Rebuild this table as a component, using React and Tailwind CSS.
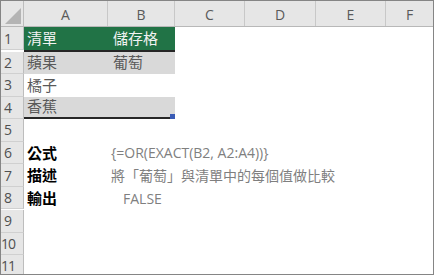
import React from "react";

const cols = ["A", "B", "C", "D", "E", "F"];
const colW = ["w-[84px]", "w-[67px]", "w-[70px]", "w-[71px]", "w-[70px]", "flex-1"];
const rowH = ["h-[23px]", "h-[22px]", "h-[23px]", "h-[22px]", "h-[23px]", "h-[22px]", "h-[23px]", "h-[22px]", "h-[23px]", "h-[22px]", "h-[22px]"];

const cjk = { fontFamily: '"Open Sans", "Noto Sans CJK TC", sans-serif' };

function RowHead({ n, h }) {
  return (
    <div
      className={`${h} w-[23px] shrink-0 bg-[#e6e6e6] border-r border-[#bdbdbd] border-b border-b-[#d0d0d0] flex items-center text-[14px] text-[#505050] ${n >= 10 ? "pl-0 tracking-[-1px]" : "pl-[3px]"}`}
    >
      {n}
    </div>
  );
}

export default function App() {
  return (
    <div className="w-[435px] h-[276px] bg-white">
      <div className="w-[434px] h-[275px] border border-[#858585] flex flex-col overflow-hidden" style={cjk}>
        {/* column headers */}
        <div className="h-[26px] flex bg-[#e6e6e6] border-b border-[#b8b8b8] shrink-0">
          <div className="w-[23px] shrink-0 border-r border-[#bdbdbd] relative">
            <svg width="20" height="20" className="absolute right-[1px] bottom-[1px]" viewBox="0 0 20 20">
              <polygon points="19,3 19,19 3,19" fill="#b4b4b4" />
            </svg>
          </div>
          {cols.map((c, i) => (
            <div
              key={c}
              className={`${colW[i]} ${i < 5 ? "shrink-0 border-r border-[#c8c8c8]" : ""} flex items-center justify-center text-[14px] text-[#5a5a5a] pt-[2px]`}
            >
              {c}
            </div>
          ))}
        </div>
        {/* rows */}
        <div className="flex">
          <RowHead n={1} h={rowH[0]} />
          <div className="flex border-b-2 border-[#262626] bg-[#217346] text-[#f2f2f2] text-[15px] items-center">
            <div className="w-[84px] pl-[3px]">清單</div>
            <div className="w-[67px] pl-[5px]">儲存格</div>
          </div>
        </div>
        <div className="flex">
          <RowHead n={2} h={rowH[1]} />
          <div className="flex bg-[#d9d9d9] text-[#595959] text-[15px] items-center h-[22px]">
            <div className="w-[84px] pl-[3px]">蘋果</div>
            <div className="w-[67px] pl-[5px]">葡萄</div>
          </div>
        </div>
        <div className="flex">
          <RowHead n={3} h={rowH[2]} />
          <div className="flex text-[#595959] text-[15px] items-center h-[23px]">
            <div className="w-[84px] pl-[3px]">橘子</div>
          </div>
        </div>
        <div className="flex">
          <RowHead n={4} h={rowH[3]} />
          <div className="flex bg-[#d9d9d9] text-[#595959] text-[15px] items-center h-[22px] border-b-2 border-[#262626] relative">
            <div className="w-[84px] pl-[3px]">香蕉</div>
            <div className="w-[67px]"></div>
            <div className="absolute right-0 bottom-[-2px] w-[5px] h-[5px] bg-[#3a5bb5]" />
          </div>
        </div>
        <div className="flex">
          <RowHead n={5} h={rowH[4]} />
        </div>
        <div className="flex">
          <RowHead n={6} h={rowH[5]} />
          <div className="flex items-center text-[15px]">
            <div className="w-[84px] pl-[3px] font-bold text-black">公式</div>
            <div className="text-[#7f7f7f] text-[14px] whitespace-nowrap pl-[3px]">{"{=OR(EXACT(B2, A2:A4))}"}</div>
          </div>
        </div>
        <div className="flex">
          <RowHead n={7} h={rowH[6]} />
          <div className="flex items-center text-[15px]">
            <div className="w-[84px] pl-[3px] font-bold text-black">描述</div>
            <div className="text-[#7f7f7f] text-[14px] whitespace-nowrap pl-[3px]">將「葡萄」與清單中的每個值做比較</div>
          </div>
        </div>
        <div className="flex">
          <RowHead n={8} h={rowH[7]} />
          <div className="flex items-center text-[15px]">
            <div className="w-[84px] pl-[3px] font-bold text-black">輸出</div>
            <div className="text-[#7f7f7f] text-[14px] pl-[15px]">FALSE</div>
          </div>
        </div>
        <div className="flex">
          <RowHead n={9} h={rowH[8]} />
        </div>
        <div className="flex">
          <RowHead n={10} h={rowH[9]} />
        </div>
        <div className="flex flex-1">
          <div className="w-[23px] shrink-0 bg-[#e6e6e6] border-r border-[#bdbdbd] flex items-center text-[14px] text-[#505050] tracking-[-1px]">11</div>
        </div>
      </div>
    </div>
  );
}
